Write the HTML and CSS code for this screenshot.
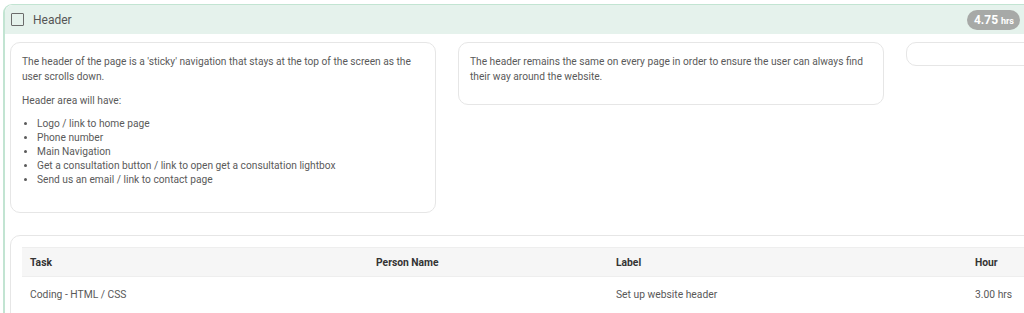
FILE: index.html
```html
<!DOCTYPE html>
<html lang="en">
<head>
    <meta charset="UTF-8">
    <meta name="viewport" content="width=device-width, initial-scale=1.0">
    <title>Header</title>
    <link rel="stylesheet" href="styles.css">
</head>
<body>
    <div class="panel">
        <div class="panel-head">
            <span class="check"></span>
            <span class="title">Header</span>
            <span class="badge">4.75 <small>hrs</small></span>
        </div>

        <div class="panel-body">
            <div class="cards">
                <div class="card">
                    <p>The header of the page is a 'sticky' navigation that stays at the top of the screen as the user scrolls down.</p>
                    <p>Header area will have:</p>
                    <ul>
                        <li>Logo / link to home page</li>
                        <li>Phone number</li>
                        <li>Main Navigation</li>
                        <li>Get a consultation button / link to open get a consultation lightbox</li>
                        <li>Send us an email / link to contact page</li>
                    </ul>
                </div>
                <div class="card">
                    <p>The header remains the same on every page in order to ensure the user can always find their way around the website.</p>
                </div>
                <div class="card card-empty"></div>
            </div>

            <div class="card table-card">
                <table>
                    <thead>
                        <tr>
                            <th class="col-task">Task</th>
                            <th class="col-person">Person Name</th>
                            <th class="col-label">Label</th>
                            <th class="col-hour">Hour</th>
                        </tr>
                    </thead>
                    <tbody>
                        <tr>
                            <td>Coding - HTML / CSS</td>
                            <td></td>
                            <td>Set up website header</td>
                            <td>3.00 hrs</td>
                        </tr>
                    </tbody>
                </table>
            </div>
        </div>
    </div>
</body>
</html>
```

FILE: styles.css
```css
html, body {
    overflow: hidden;
}
body {
    font-family: Roboto, "Liberation Sans", Arial, sans-serif;
    background-color: #fff;
    color: #555;
    margin: 0;
    padding: 4px 0 0 3px;
}
.panel {
    border-left: 2px solid #c2e4d2;
    border-top: 1px solid #c2e4d2;
    border-top-left-radius: 9px;
    height: 400px;
}
.panel-head {
    background-color: #e5f2ec;
    height: 29px;
    display: flex;
    align-items: center;
    padding: 0 4px 0 6px;
    border-top-left-radius: 8px;
}
.check {
    width: 11px;
    height: 11px;
    border: 1.5px solid #6b6b6b;
    border-radius: 1px;
    margin-right: 9px;
}
.title {
    font-size: 12px;
    color: #555;
}
.badge {
    margin-left: auto;
    background-color: #a7a9a7;
    color: #fff;
    font-weight: bold;
    font-size: 12px;
    height: 20px;
    line-height: 20px;
    padding: 0 6px 0 7px;
    border-radius: 10px;
}
.badge small {
    font-size: 9px;
}
.panel-body {
    padding: 8px 0 0 5px;
}
.cards {
    display: flex;
    align-items: flex-start;
    gap: 22px;
    width: 1400px;
}
.card {
    flex: 0 0 auto;
    width: 402px;
    background-color: #fff;
    border: 1px solid #e6e6e6;
    border-radius: 10px;
    padding: 11px;
    font-size: 10.2px;
    line-height: 15px;
    color: #5a5a5a;
}
.card p {
    margin: 0 0 9px;
}
.card ul {
    margin: 0 0 14px;
    padding-left: 15px;
    line-height: 14px;
}
.table-card {
    width: 1200px;
    margin-top: 22px;
    padding: 11px;
}
table {
    border-collapse: collapse;
    width: 1100px;
    font-size: 10.3px;
    text-align: left;
}
th {
    background-color: #f6f6f6;
    color: #333;
    font-weight: bold;
    height: 28px;
    padding: 0 8px;
    border-top: 1px solid #eee;
    border-bottom: 1px solid #eee;
}
td {
    height: 35px;
    padding: 0 8px;
    color: #585858;
}
.col-task { width: 330px; }
.col-person { width: 224px; }
.col-label { width: 343px; }
```
